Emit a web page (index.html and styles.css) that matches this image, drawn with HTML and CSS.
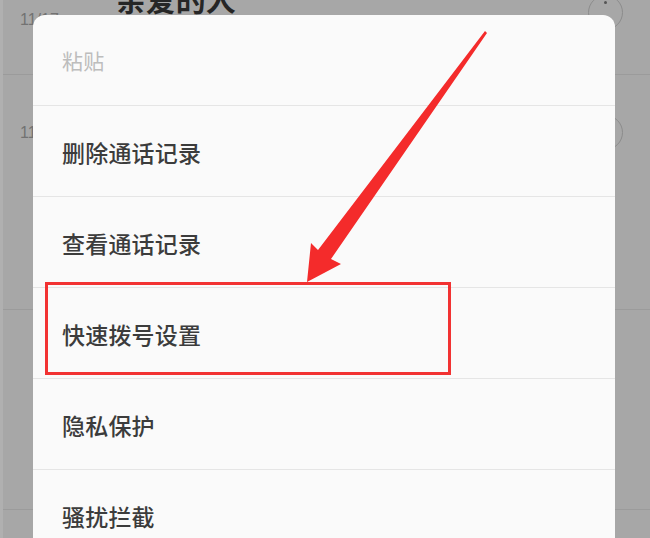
FILE: index.html
```html
<!DOCTYPE html>
<html lang="zh-CN">
<head>
<meta charset="utf-8">
<title>通话记录菜单</title>
<link rel="stylesheet" href="styles.css">
</head>
<body>
<div class="screen">
  <div class="list">
    <div class="row row-first">
      <span class="time">11/17</span>
      <span class="tick"></span>
      <span class="name">亲爱的人</span>
      <span class="info"><span class="dot"></span></span>
    </div>
    <div class="row row-second">
      <span class="time">11/17</span>
      <span class="info"></span>
    </div>
    <div class="row row-third"></div>
  </div>

  <div class="dialog">
    <div class="item disabled">粘贴</div>
    <div class="item">删除通话记录</div>
    <div class="item">查看通话记录</div>
    <div class="item">快速拨号设置</div>
    <div class="item">隐私保护</div>
    <div class="item">骚扰拦截</div>
  </div>

  <div class="highlight"></div>
  <svg class="arrow" width="650" height="538" viewBox="0 0 650 538">
    <polygon points="485,31 487,33 331,259 341,264 307,282 311,243 318,250" fill="#f42b2b"/>
  </svg>
</div>
</body>
</html>
```

FILE: styles.css
```css
html, body {
  margin: 0;
  padding: 0;
}

body {
  background: #a7a7a7;
  font-family: "Noto Sans CJK SC", "Noto Sans", sans-serif;
  overflow: hidden;
}

.screen {
  position: relative;
  width: 650px;
  height: 538px;
  overflow: hidden;
  border-left: 3px solid #b0b0b0;
  box-sizing: border-box;
}

/* background list (dimmed) */
.list {
  margin-top: -22px;
  display: flex;
  flex-direction: column;
}

.row {
  display: flex;
  align-items: flex-start;
  border-bottom: 1px solid #9b9b9b;
  box-sizing: border-box;
}

.row-first {
  height: 97px;
  border-top: 1px solid #9b9b9b;
}

.row-second {
  height: 235px;
}

.row-third {
  height: 200px;
}

.time {
  margin-left: 17px;
  font-size: 16px;
  line-height: 16px;
  color: #727272;
  font-family: "Liberation Sans", sans-serif;
}

.row-first .time {
  margin-top: 33px;
}

.row-second .time {
  margin-top: 50px;
}

.tick {
  width: 1px;
  height: 10px;
  background: #777;
  margin-left: 14px;
  margin-top: 36px;
}

.name {
  margin-left: 42px;
  margin-top: 4px;
  font-size: 30px;
  line-height: 30px;
  font-weight: 700;
  color: #262626;
}

.info {
  margin-left: auto;
  margin-right: 27px;
  width: 35px;
  height: 35px;
  border: 1.5px solid #8c8c8c;
  border-radius: 50%;
  box-sizing: border-box;
  display: flex;
  justify-content: center;
}

.row-first .info {
  margin-top: 16px;
}

.row-second .info {
  margin-top: 40px;
}

.dot {
  width: 3px;
  height: 3px;
  border-radius: 50%;
  background: #555;
  margin-top: 5px;
}

/* popup menu */
.dialog {
  position: absolute;
  left: 30px;
  top: 15px;
  width: 582px;
  height: 560px;
  background: #fafafa;
  border-radius: 12px;
  overflow: hidden;
}

.item {
  height: 91px;
  box-sizing: border-box;
  border-bottom: 1px solid #e5e5e5;
  display: flex;
  align-items: center;
  padding-left: 29px;
  padding-top: 2px;
  font-size: 23px;
  font-weight: 500;
  color: #3c3c3c;
  letter-spacing: 0.2px;
}

.item.disabled {
  color: #bdbdbd;
  font-size: 21px;
  font-weight: 400;
  padding-top: 0;
}

/* annotation overlays */
.highlight {
  position: absolute;
  left: 42px;
  top: 282px;
  width: 406px;
  height: 93px;
  box-sizing: border-box;
  border: 3.5px solid #f23232;
}

.arrow {
  position: absolute;
  left: -3px;
  top: 0;
}
```
